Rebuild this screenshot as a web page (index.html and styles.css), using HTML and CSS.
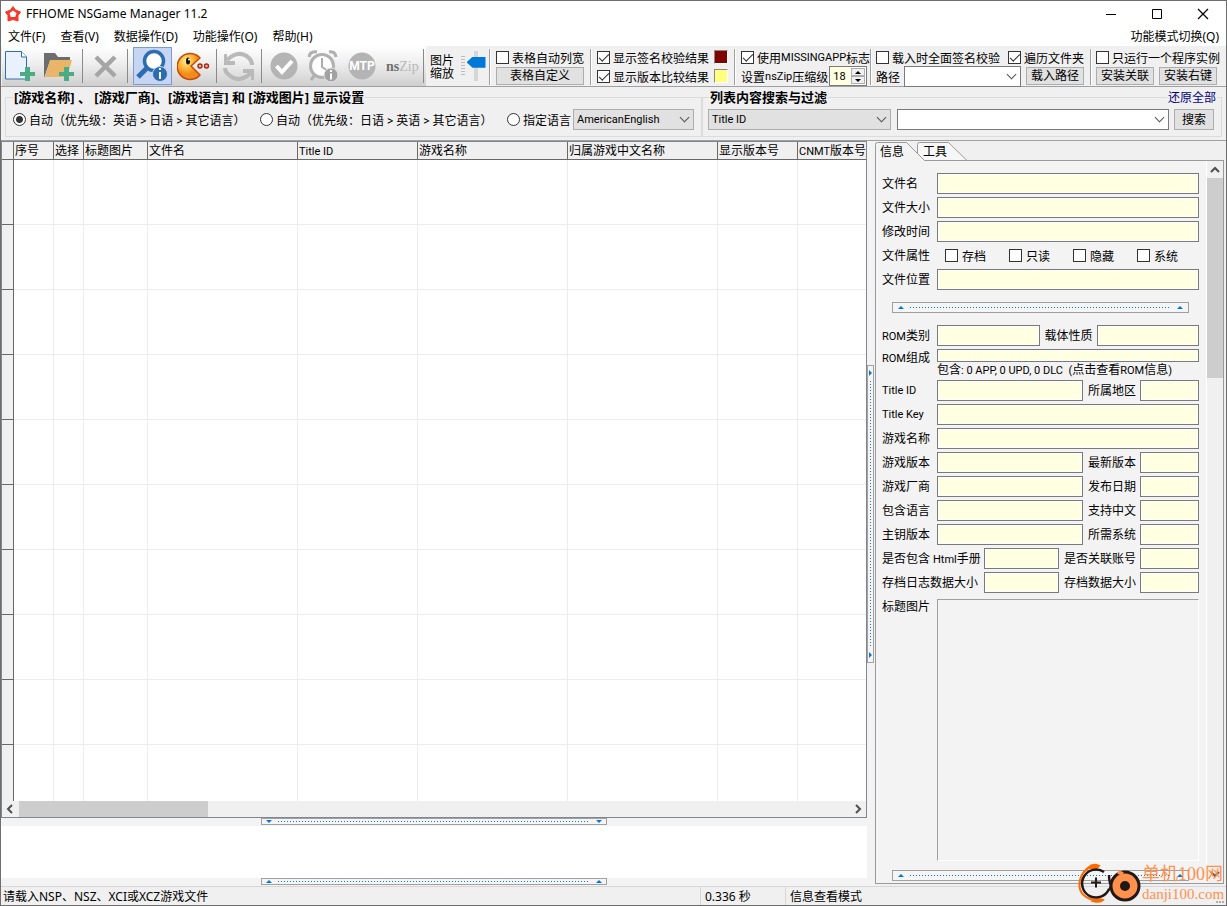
FILE: index.html
```html
<!DOCTYPE html>
<html lang="zh-CN">
<head>
<meta charset="utf-8">
<title>FFHOME NSGame Manager 11.2</title>
<link rel="stylesheet" href="styles.css">
</head>
<body>
<div class="window">
  <header class="titlebar">
    <svg class="logo" width="16" height="16" viewBox="0 0 16 16"><path d="M8 .5 10.500 4 15.500 6 13 9.500 13 15 8 13.500 3 15 3 9.500 .5 6 5.500 4z" fill="#f5392b" stroke="#f5392b" stroke-linejoin="round"/><path d="M8 4.500 11.500 7.200 10.200 11H5.800L4.500 7.200z" fill="#fff"/></svg>
    <span class="title">FFHOME NSGame Manager 11.2</span>
    <button class="winbtn" aria-label="最小化"><svg width="12" height="12"><path d="M1 6.500h10" stroke="#000"/></svg></button>
    <button class="winbtn" aria-label="最大化"><svg width="12" height="12"><path d="M1.500 1.500h9v9h-9z" fill="none" stroke="#000"/></svg></button>
    <button class="winbtn" aria-label="关闭"><svg width="12" height="12"><path d="M1 1l10 10M11 1 1 11" stroke="#000" stroke-width="1.200"/></svg></button>
  </header>
  <nav class="menubar">
    <button>文件(F)</button><button>查看(V)</button><button>数据操作(D)</button><button>功能操作(O)</button><button>帮助(H)</button>
    <button class="push">功能模式切换(Q)</button>
  </nav>

  <div class="toolbar">
    <div class="icons">
      <button class="tool" aria-label="添加文件"><svg width="34" height="34" viewBox="0 0 34 34"><path d="M1.500 2.500h16l5 5.500v22h-21z" fill="#e9f2fc" stroke="#2f6eb0"/><path d="M17.500 2.500v5.500h5" fill="#fff" stroke="#2f6eb0"/><path d="M21 18h5v5h5v4h-5v5h-5v-5h-5v-4h5z" fill="#4bab83"/></svg></button>
      <button class="tool" aria-label="添加文件夹"><svg width="34" height="34" viewBox="0 0 34 34"><path d="M1 29V4h11l3 4h12v4H7z" fill="#6d6d6d"/><path d="M7 11h22l-5 17H2z" fill="#e9b568"/><path d="M21 18h5v5h5v4h-5v5h-5v-5h-5v-4h5z" fill="#4bab83"/></svg></button>
      <i class="sep"></i>
      <button class="tool" aria-label="删除"><svg width="34" height="34" viewBox="0 0 34 34"><path d="M8 8l19 19M27 8 8 27" stroke="#a5a5a5" stroke-width="4.500"/></svg></button>
      <i class="sep"></i>
      <button class="tool on" aria-label="查看信息"><svg width="34" height="34" viewBox="0 0 34 34"><circle cx="18" cy="12" r="9.500" fill="#fff" stroke="#2c6cb0" stroke-width="3.500"/><path d="M11 19 2 28" stroke="#2c6cb0" stroke-width="5"/><circle cx="24" cy="25" r="7.500" fill="#2c6cb0" stroke="#c5d5f2"/><path d="M24 23v7M24 19v2" stroke="#fff" stroke-width="2"/></svg></button>
      <button class="tool" aria-label="吃豆人"><svg width="34" height="34" viewBox="0 0 34 34"><defs><radialGradient id="pac" cx=".4" cy=".3"><stop offset="0" stop-color="#fff0a0"/><stop offset=".6" stop-color="#ffb637"/><stop offset="1" stop-color="#f28a1c"/></radialGradient></defs><path d="M14 17 23 9A13 13 0 1 0 23 26z" fill="url(#pac)" stroke="#c44a08" stroke-width="1.500" stroke-linejoin="round"/><ellipse cx="11" cy="12" rx="2" ry="3.500" fill="#111"/><circle cx="12" cy="10.500" r="1" fill="#fff"/><circle cx="23" cy="17" r="2" fill="#ffb09a" stroke="#a5290f" stroke-width="1.400"/><circle cx="29.500" cy="17" r="2" fill="#ffb09a" stroke="#a5290f" stroke-width="1.400"/></svg></button>
      <i class="sep"></i>
      <button class="tool" aria-label="刷新"><svg width="34" height="34" viewBox="0 0 34 34"><path d="M5 11Q17 0 27 9q3 3 3 7M29 24Q17 35 7 26q-4-3-4-7" fill="none" stroke="#b9b9b9" stroke-width="4"/><path d="M2 5h3v7h8v4H2zM32 31h-3v-7h-8v-4h11z" fill="#b9b9b9"/></svg></button>
      <i class="sep"></i>
      <button class="tool" aria-label="校验"><svg width="34" height="34" viewBox="0 0 34 34"><circle cx="17" cy="17" r="13.500" fill="#b4b4b4"/><path d="M9.500 17l5.500 6 10-11" fill="none" stroke="#fff" stroke-width="4"/></svg></button>
      <button class="tool" aria-label="定时"><svg width="34" height="34" viewBox="0 0 34 34"><path d="M3 8q1-6 8-5M23 3q6-1 7 5M8 27l-3 4M25 27l3 4" fill="none" stroke="#b0b0b0" stroke-width="3"/><circle cx="16" cy="17" r="11.500" fill="#fff" stroke="#b0b0b0" stroke-width="3"/><path d="M16 9v9l6 4" fill="none" stroke="#adadad" stroke-width="2"/><circle cx="25" cy="26" r="7" fill="#a2a2a2" stroke="#e4e4e4"/><path d="M25 24.500v6M25 21v2" stroke="#fff" stroke-width="2"/></svg></button>
      <button class="tool" aria-label="MTP"><svg width="34" height="34" viewBox="0 0 34 34"><circle cx="17" cy="17" r="13.500" fill="#b4b4b4"/><text x="17" y="21" class="mtp" text-anchor="middle">MTP</text></svg></button>
      <button class="tool" aria-label="nsZip"><svg class="open" width="34" height="34" viewBox="0 0 34 34"><text x="2" y="22" class="nszip"><tspan class="ns">ns</tspan><tspan class="zip">Zip</tspan></text></svg></button>
      <i class="sep"></i>
    </div>
    <label class="zoomlabel" for="zoom">图片<br>缩放</label>
    <div class="slider"><input id="zoom" type="range" min="0" max="10" value="7"></div>
    <i class="bar"></i>
    <div class="stack">
      <label><input type="checkbox">表格自动列宽</label>
      <button class="btn wide">表格自定义</button>
    </div>
    <i class="bar"></i>
    <div class="stack">
      <div class="line"><label><input type="checkbox" checked>显示签名校验结果</label><span class="swatch red"></span></div>
      <div class="line"><label><input type="checkbox" checked>显示版本比较结果</label><span class="swatch yellow"></span></div>
    </div>
    <i class="bar"></i>
    <div class="stack level">
      <label><input type="checkbox" checked>使用<span class="la">MISSINGAPP</span>标志</label>
      <div class="line"><label for="lvl">设置<span class="la">nsZip</span>压缩级</label><span class="spin"><input id="lvl" type="text" value="18"><span class="arrows"><button aria-label="增加"><i class="tri up"></i></button><button aria-label="减少"><i class="tri down"></i></button></span></span></div>
    </div>
    <i class="bar"></i>
    <div class="stack load">
      <div class="line spread"><label><input type="checkbox">载入时全面签名校验</label><label><input type="checkbox" checked>遍历文件夹</label></div>
      <div class="line"><label for="path">路径</label><span class="combo path"><input id="path" type="text"></span><button class="btn">载入路径</button></div>
    </div>
    <i class="bar"></i>
    <div class="stack last">
      <label><input type="checkbox">只运行一个程序实例</label>
      <div class="line gap"><button class="btn">安装关联</button><button class="btn">安装右键</button></div>
    </div>
  </div>

  <div class="filters">
    <fieldset class="lang">
      <legend>[游戏名称] 、 [游戏厂商]、[游戏语言] 和 [游戏图片] 显示设置</legend>
      <div class="frow">
        <label class="auto"><input type="radio" name="lang" checked>自动（优先级：英语 &gt; 日语 &gt; 其它语言）</label>
        <label class="auto"><input type="radio" name="lang">自动（优先级：日语 &gt; 英语 &gt; 其它语言）</label>
        <label><input type="radio" name="lang">指定语言</label>
        <span class="combo grey lsel"><select aria-label="语言"><option>AmericanEnglish</option></select></span>
      </div>
    </fieldset>
    <fieldset class="search">
      <legend>列表内容搜索与过滤</legend>
      <a class="reset" href="#">还原全部</a>
      <div class="frow">
        <span class="combo grey fsel"><select aria-label="搜索字段"><option>Title ID</option></select></span>
        <span class="combo fill"><input type="text" aria-label="搜索内容"></span>
        <button class="btn find">搜索</button>
      </div>
    </fieldset>
  </div>

  <main class="main">
    <section class="left">
      <div class="gridbox">
        <div class="gridview">
          <table>
            <colgroup><col class="c0"><col class="c1"><col class="c2"><col class="c3"><col class="c4"><col class="c5"><col class="c4"><col class="c4"><col class="c6"><col></colgroup>
            <thead><tr><th></th><th>序号</th><th>选择</th><th>标题图片</th><th>文件名</th><th><span class="la">Title ID</span></th><th>游戏名称</th><th>归属游戏中文名称</th><th>显示版本号</th><th><span class="la">CNMT</span>版本号</th></tr></thead>
            <tbody>
              <tr><td></td><td></td><td></td><td></td><td></td><td></td><td></td><td></td><td></td><td></td></tr>
              <tr><td></td><td></td><td></td><td></td><td></td><td></td><td></td><td></td><td></td><td></td></tr>
              <tr><td></td><td></td><td></td><td></td><td></td><td></td><td></td><td></td><td></td><td></td></tr>
              <tr><td></td><td></td><td></td><td></td><td></td><td></td><td></td><td></td><td></td><td></td></tr>
              <tr><td></td><td></td><td></td><td></td><td></td><td></td><td></td><td></td><td></td><td></td></tr>
              <tr><td></td><td></td><td></td><td></td><td></td><td></td><td></td><td></td><td></td><td></td></tr>
              <tr><td></td><td></td><td></td><td></td><td></td><td></td><td></td><td></td><td></td><td></td></tr>
              <tr><td></td><td></td><td></td><td></td><td></td><td></td><td></td><td></td><td></td><td></td></tr>
              <tr><td></td><td></td><td></td><td></td><td></td><td></td><td></td><td></td><td></td><td></td></tr>
              <tr><td></td><td></td><td></td><td></td><td></td><td></td><td></td><td></td><td></td><td></td></tr>
            </tbody>
          </table>
        </div>
        <div class="hscroll"><svg width="16" height="16"><path d="M10 4 6 8l4 4" class="chev"/></svg><i class="hthumb"></i><svg width="16" height="16"><path d="M6 4l4 4-4 4" class="chev"/></svg></div>
      </div>
      <div class="hsplit"><div class="grip"><i class="tri down"></i><i class="dots"></i><i class="tri down"></i></div></div>
      <div class="log"></div>
      <div class="hsplit"><div class="grip"><i class="tri up"></i><i class="dots"></i><i class="tri up"></i></div></div>
    </section>
    <div class="vsplit"><div class="vgrip"><i class="tri east"></i><i class="vdots"></i><i class="tri east"></i></div></div>
    <section class="side">
      <div class="tabs">
        <svg class="tabshape" width="96" height="20"><path d="M42.500 19V3.500q0-2 2-2H73.500L92 19.500" fill="#f7f7f7" stroke="#9a9a9a"/><path d="M.5 20V3.500q0-2 2-2H31.500L49.500 19.500v1z" fill="#f3f3f3"/><path d="M.5 20V3.500q0-2 2-2H31.500L49.500 19.500H96" fill="none" stroke="#9a9a9a"/></svg>
        <button class="tab">信息</button><button class="tab">工具</button>
      </div>
      <div class="page">
        <form class="form">
          <div class="row"><label for="f1">文件名</label><input id="f1"></div>
          <div class="row"><label for="f2">文件大小</label><input id="f2"></div>
          <div class="row"><label for="f3">修改时间</label><input id="f3"></div>
          <div class="row"><span class="cap">文件属性</span><div class="attrs"><label><input type="checkbox">存档</label><label><input type="checkbox">只读</label><label><input type="checkbox">隐藏</label><label><input type="checkbox">系统</label></div></div>
          <div class="row"><label for="f4">文件位置</label><input id="f4"></div>
          <div class="grip tall"><i class="tri up"></i><i class="dots"></i><i class="tri up"></i></div>
          <div class="row"><label for="f5"><span class="la">ROM</span>类别</label><input id="f5"><label class="mid" for="f6">载体性质</label><input id="f6"></div>
          <div class="row rom"><label for="f7"><span class="la">ROM</span>组成</label><div class="romcol"><input id="f7"><span class="note">包含<span class="la">: 0 APP, 0 UPD, 0 DLC&nbsp; (</span>点击查看<span class="la">ROM</span>信息<span class="la">)</span></span></div></div>
          <div class="row"><label for="f8"><span class="la">Title ID</span></label><input id="f8"><label class="mid" for="f9">所属地区</label><input class="s" id="f9"></div>
          <div class="row"><label for="f10"><span class="la">Title Key</span></label><input id="f10"></div>
          <div class="row"><label for="f11">游戏名称</label><input id="f11"></div>
          <div class="row"><label for="f12">游戏版本</label><input id="f12"><label class="mid" for="f13">最新版本</label><input class="s" id="f13"></div>
          <div class="row"><label for="f14">游戏厂商</label><input id="f14"><label class="mid" for="f15">发布日期</label><input class="s" id="f15"></div>
          <div class="row"><label for="f16">包含语言</label><input id="f16"><label class="mid" for="f17">支持中文</label><input class="s" id="f17"></div>
          <div class="row"><label for="f18">主钥版本</label><input id="f18"><label class="mid" for="f19">所需系统</label><input class="s" id="f19"></div>
          <div class="row"><label class="long" for="f20">是否包含 <span class="la">Html</span>手册</label><input id="f20"><label class="mid6" for="f21">是否关联账号</label><input class="s" id="f21"></div>
          <div class="row"><label class="long" for="f22">存档日志数据大小</label><input id="f22"><label class="mid6" for="f23">存档数据大小</label><input class="s" id="f23"></div>
          <div class="row pic"><span class="cap">标题图片</span><div class="preview"></div></div>
          <div class="grip tall last-grip"><i class="tri up"></i><i class="dots"></i><i class="tri up"></i></div>
        </form>
        <div class="vscroll"><svg width="16" height="17"><path d="M4 11l4-4 4 4" class="chev"/></svg><i class="vthumb"></i><svg width="16" height="17"><path d="M4 6l4 4 4-4" class="chev"/></svg></div>
      </div>
    </section>
  </main>

  <footer class="status"><span class="msg">请载入NSP、NSZ、XCI或XCZ游戏文件</span><span class="time">0.336 秒</span><span class="mode">信息查看模式</span></footer>

  <div class="mark">
    <svg width="64" height="42" viewBox="0 0 64 42"><path d="M18 2Q3 6 1.500 20T19 38" fill="none" stroke="#ff6a00" stroke-width="2"/><path d="M10 5q5-5 11-2-3 4-9 2zM15 38q7 2 10-1-4-2-10 1z" fill="#ff6a00" stroke="#ff6a00" stroke-width="2"/><path d="M26 9A14 14 0 1 0 31 26" fill="none" stroke="#231815" stroke-width="2.500"/><path d="M18 14.500v10M13 19.500h10" stroke="#231815" stroke-width="2"/><path d="M31 12q0 9 4 14M31 27q5-9 9-13" fill="none" stroke="#231815" stroke-width="2.500"/><circle cx="47" cy="23" r="14" fill="#ff914d" stroke="#231815" stroke-width="3"/><path d="M40 9l5 2" stroke="#ff914d" stroke-width="4"/><circle cx="47" cy="23" r="5" fill="#231815"/></svg>
    <div class="marktext"><span class="m1">单机100网</span><span class="m2">danji100.com</span></div>
    <svg class="sizer" width="8" height="4"><path d="M0 1h2v2H0zM3 1h2v2H3zM6 1h2v2H6z" fill="#b0b0b0"/></svg>
  </div>
</div>
</body>
</html>
```

FILE: styles.css
```css
* { box-sizing: border-box; }
html, body { height: 100%; margin: 0; }
body, button, input, select {
  font-family: Roboto, "Noto Sans CJK SC", sans-serif;
  font-size: 12px;
  color: #000;
}
button { padding: 0; border: 0; background: none; white-space: nowrap; }
input { margin: 0; }
svg { display: block; flex: none; }
label, .cap { white-space: nowrap; }
.la { font-size: 11px; }
.window {
  position: relative;
  display: flex;
  flex-direction: column;
  height: 100vh;
  border: 1px solid #6e6e6e;
  background: #f0f0f0;
  overflow: hidden;
}

.titlebar { display: flex; align-items: center; flex: none; height: 25px; padding-left: 4px; background: #fff; }
.title { flex: 1; margin-left: 5px; font: 12px "Noto Sans", sans-serif; }
.winbtn { display: flex; align-items: center; justify-content: center; width: 46px; height: 24px; }
.menubar { display: flex; flex: none; gap: 15px; height: 20px; padding: 2px 7px 0; background: #fff; }
.menubar button, .status { font-family: "Noto Sans", "Noto Sans CJK SC", sans-serif; line-height: 18px; }
.push { margin-left: auto; }

.toolbar { display: flex; flex: none; height: 41px; padding-left: 1px; border-bottom: 1px solid #a0a0a0; }
.icons { display: flex; align-items: center; gap: 5px; padding: 0 2px 0 2px; background: linear-gradient(#fff, #f0f0f0 40%, #cfcfcf); }
.tool { display: flex; align-items: center; justify-content: center; width: 34px; height: 38px; }
.tool.on { width: 39px; border: 1px solid #7a9be0; background: #c5d5f2; }
.sep { width: 1px; height: 34px; background: #8a8a8a; }
.mtp { font: bold 12px Roboto, sans-serif; fill: #fff; }
.open { overflow: visible; }
.nszip { font: 14px "Liberation Serif", serif; }
.ns { fill: #707070; font-weight: bold; }
.zip { fill: #b8b8b8; }
.zoomlabel { padding: 9px 0 0 4px; line-height: 13px; }
.slider { display: flex; justify-content: center; width: 35px; padding: 5px 3px 4px 12px; background: repeating-linear-gradient(#bbb 0 1px, transparent 1px 3px) 7px 10px / 4px 20px no-repeat; }
.slider input { appearance: none; writing-mode: vertical-lr; direction: rtl; width: 19px; height: 30px; background: linear-gradient(#d6d6d6, #d6d6d6) center / 4px 100% no-repeat; }
.slider input::-webkit-slider-thumb { appearance: none; width: 19px; height: 11px; background: #0078d7; clip-path: polygon(6px 0, 100% 0, 100% 100%, 6px 100%, 0 50%); }
.bar { flex: none; width: 1px; height: 36px; margin: 3px 0 0; background: #a0a0a0; box-shadow: 1px 0 #fff; }
.stack { display: flex; flex-direction: column; gap: 1px; padding: 2px 6px 0 6px; }
.stack label { display: flex; align-items: center; height: 18px; }
.level { flex: none; width: 135px; padding-right: 0; }
.line { display: flex; align-items: center; height: 18px; }
.line.spread { justify-content: space-between; }
.line.gap { gap: 5px; }
input[type="checkbox"] { appearance: none; position: relative; flex: none; width: 13px; height: 13px; margin-right: 3px; border: 1px solid #333; background: #fff; }
input[type="checkbox"]:checked::after { content: ""; position: absolute; left: 1px; top: 2px; width: 9px; height: 4px; border: solid #333; border-width: 0 0 1px 1px; transform: rotate(-45deg); }
.btn { height: 18px; min-width: 58px; border: 1px solid #adadad; background: #e1e1e1; line-height: 16px; }
.btn.wide { width: 88px; }
.swatch { width: 14px; height: 14px; margin-left: 5px; border: 1px solid; border-color: #888 #fff #fff #888; }
.red { background: #800000; }
.yellow { background: #ffff80; }
.spin { display: flex; width: 38px; height: 20px; margin-left: 1px; border: 1px solid #7a7a7a; background: #fff; }
.spin input { width: 20px; padding: 0 0 0 3px; border: 0; background: #ffffe1; font-size: 11px; }
.arrows { display: flex; flex-direction: column; flex: 1; padding: 1px; }
.arrows button { display: flex; flex: 1; align-items: center; justify-content: center; border: 1px solid #adadad; background: #f0f0f0; }
.arrows .tri { color: #000; }
.load { flex: 1; padding-left: 5px; }
.last { flex: none; padding-left: 5px; }
.combo { position: relative; display: flex; height: 21px; }
.combo::after { content: ""; position: absolute; right: 6px; top: 5px; width: 6px; height: 6px; border: solid #555; border-width: 0 1px 1px 0; transform: rotate(45deg); pointer-events: none; }
.combo input, .combo select { appearance: none; width: 100%; height: 100%; padding: 0 4px 0 3px; border: 1px solid #7a7a7a; border-radius: 0; background: #fff; font-size: 11px; }
.combo.grey select { border-color: #adadad; background: #e1e1e1; }
.path { flex: 1; margin: 0 5px 0 4px; }

.filters { display: flex; flex: none; height: 54px; padding: 2px 4px 3px; border-bottom: 1px solid #a0a0a0; }
fieldset { position: relative; min-width: 0; margin: 0; padding: 0 7px; border: 1px solid #dcdcdc; }
.lang { width: 697px; }
.search { flex: 1; padding: 0 7px 0 5px; }
legend { padding: 0 1px; font: bold 13px/16px "Noto Sans", "Noto Sans CJK SC", sans-serif; white-space: nowrap; }
.search legend { margin-left: 1px; }
.frow { display: flex; align-items: center; height: 21px; margin-top: 4px; }
.frow label { display: flex; align-items: center; }
.frow .auto { width: 247px; }
input[type="radio"] { appearance: none; flex: none; width: 13px; height: 13px; margin-right: 3px; border: 1px solid #333; border-radius: 50%; background: #fff; }
input[type="radio"]:checked { background: radial-gradient(circle, #333 3px, #fff 4px); }
.lsel { width: 121px; margin-left: 2px; }
.fsel { width: 183px; margin-right: 6px; }
.fill { flex: 1; }
.find { width: 40px; min-width: 0; height: 21px; margin-left: 5px; }
.reset { position: absolute; right: 4px; top: -15px; padding: 0 1px; background: #f0f0f0; color: #000080; line-height: 16px; text-decoration: none; }

.main { display: flex; flex: 1; min-height: 0; }
.left { display: flex; flex: 1; flex-direction: column; min-width: 0; }
.gridbox { display: flex; flex: 1; flex-direction: column; min-height: 0; border: 1px solid #82878f; background: #fff; }
.gridview { flex: 1; min-height: 0; overflow: hidden; }
table { width: 100%; table-layout: fixed; border-spacing: 0; }
.c0 { width: 12px; } .c1 { width: 40px; } .c2 { width: 30px; } .c3 { width: 64px; }
.c4 { width: 150px; } .c5 { width: 120px; } .c6 { width: 80px; }
th { height: 18px; padding: 2px 0 0 1px; border: solid #696969; border-width: 0 1px 1px 0; background: #f0f0f0; font-weight: normal; line-height: 15px; text-align: left; white-space: nowrap; overflow: hidden; }
td { height: 65px; padding: 0; border: solid #ececec; border-width: 0 1px 1px 0; }
td:first-child { border-color: #696969; background: #f0f0f0; }
th:last-child, td:last-child { border-right: 0; }
.hscroll { display: flex; flex: none; height: 16px; background: #f0f0f0; }
.hthumb { width: 189px; margin: 0 auto 0 1px; background: #cdcdcd; }
.chev { fill: none; stroke: #505050; stroke-width: 2; }
.hsplit { display: flex; flex: none; justify-content: center; height: 8px; background: #f3f3f3; }
.grip { display: flex; align-items: center; width: 40%; height: 7px; padding: 0 4px; border: 1px solid #a0a0a0; background: #f5f5f5; color: #0078d7; }
.dots { flex: 1; height: 1px; margin: 0 6px; background: repeating-linear-gradient(90deg, #0078d7 0 1px, transparent 1px 3px); }
.tri { flex: none; width: 0; height: 0; border: 3px solid transparent; color: #0078d7; }
.tri.up { border-top: 0; border-bottom-color: currentColor; }
.tri.down { border-bottom: 0; border-top-color: currentColor; }
.tri.east { border-right: 0; border-left-color: currentColor; }
.log { flex: none; height: 52px; background: #fff; }
.vsplit { display: flex; align-items: center; width: 8px; background: #f3f3f3; }
.vgrip { display: flex; flex-direction: column; align-items: center; width: 7px; height: 40%; padding: 4px 0; border: 1px solid #a0a0a0; background: #f5f5f5; }
.vdots { flex: 1; width: 1px; margin: 5px 0; background: repeating-linear-gradient(#0078d7 0 1px, transparent 1px 3px); }

.side { display: flex; flex-direction: column; flex: none; width: 351px; padding: 0 2px 2px 0; }
.tabs { position: relative; display: flex; flex: none; height: 20px; background: linear-gradient(#9a9a9a, #9a9a9a) 96px 19px / 100% 1px no-repeat; }
.tabshape { position: absolute; left: 0; top: 0; }
.tab { position: relative; width: 43px; padding: 3px 0 0 5px; line-height: 17px; text-align: left; }
.page { display: flex; flex: 1; min-height: 0; border: 1px solid #9a9a9a; border-top: 0; background: #f3f3f3; }
.form { display: flex; flex: 1; flex-direction: column; gap: 3px; min-width: 0; padding: 12px 7px 0 6px; }
.row { display: flex; flex: none; align-items: center; height: 21px; }
.row > label, .row > .cap { padding-bottom: 2px; }
.row > label:first-child, .row > .cap { flex: none; width: 55px; }
.row > .long:first-child { width: 102px; }
.row > input, .romcol input { flex: 1; width: 0; min-width: 0; height: 21px; border: 1px solid #7a7a7a; background: #ffffe1; box-shadow: inset 0 0 0 1px #fff; }
.row > input.s { flex: none; width: 59px; }
.row > .mid { flex: none; width: 57px; padding-left: 5px; }
.mid6 { flex: none; width: 81px; padding-left: 5px; }
.attrs { display: flex; padding-left: 8px; }
.attrs label { display: flex; align-items: center; width: 64px; }
.attrs input { margin-right: 4px; }
.grip.tall { flex: none; align-self: center; width: calc(100% - 20px); height: 11px; margin: 9px 0; padding: 0 5px; }
.row.rom { align-items: flex-start; height: 28px; }
.rom > label { line-height: 18px; }
.romcol { display: flex; flex: 1; flex-direction: column; }
.romcol input { flex: none; width: 100%; height: 13px; }
.note { line-height: 16px; white-space: nowrap; }
.row.pic { flex: 1; align-items: stretch; min-height: 0; margin-top: 3px; }
.pic .cap { line-height: 16px; }
.preview { flex: 1; border: 1px solid; border-color: #a0a0a0 #fff #fff #a0a0a0; }
.grip.last-grip { margin: 6px 0 2px; }
.vscroll { display: flex; flex: none; flex-direction: column; width: 17px; border-left: 1px solid #fff; background: #f0f0f0; }
.vthumb { height: 200px; margin-bottom: auto; background: #cdcdcd; }

.status { display: flex; flex: none; height: 19px; border-top: 1px solid #d7d7d7; line-height: 19px; }
.msg { flex: 1; padding-left: 2px; }
.time { width: 85px; padding-left: 4px; border-left: 1px solid #d7d7d7; }
.mode { width: 441px; padding-left: 4px; border-left: 1px solid #d7d7d7; }
.mark { position: absolute; right: 0; bottom: 0; display: flex; }
.marktext { display: flex; flex-direction: column; width: 84px; color: #ff914d; white-space: nowrap; }
.m1 { font: 18px/22px "Liberation Serif", "Noto Sans CJK SC", serif; }
.m2 { font: 15px/18px "Liberation Serif", serif; }
.sizer { position: absolute; right: 2px; bottom: 1px; }
```
